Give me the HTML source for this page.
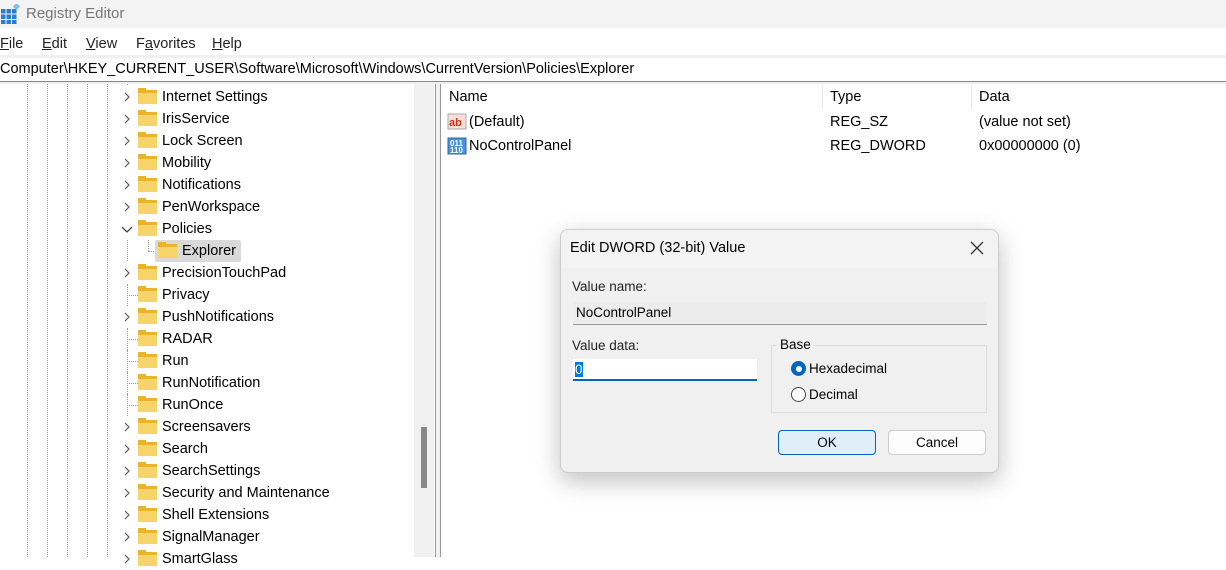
<!DOCTYPE html><html><head><style>
*{margin:0;padding:0;box-sizing:border-box}
body{width:1226px;height:557px;overflow:hidden;background:#fff;font-family:"Liberation Sans",sans-serif;font-size:14.5px;color:#000;position:relative}
.a{position:absolute;white-space:nowrap}
.dv{position:absolute;top:84px;height:473px;border-left:1px dotted #999}
.row{position:absolute;height:22px;line-height:22px}
.fold{position:absolute;width:19px;height:14px;background:#f7d46a;border-top:3px solid #eab42a;top:4px}
.fold:before{content:"";position:absolute;left:0;top:-5px;width:8px;height:3px;background:#eab42a}
.m{position:absolute;top:36px;font-size:14.5px;color:#222}
</style></head><body>
<div class="a" style="left:0;top:0;width:1226px;height:28px;background:#f3f3f3"></div>
<svg class="a" style="left:1px;top:4px" width="20" height="20" viewBox="0 0 20 20"><g fill="#2b7cd3"><rect x="0" y="5" width="4.5" height="4.5"/><rect x="5.5" y="5" width="4.5" height="4.5"/><rect x="11" y="5" width="4.5" height="4.5"/><rect x="0" y="10.5" width="4.5" height="4.5"/><rect x="5.5" y="10.5" width="4.5" height="4.5"/><rect x="11" y="10.5" width="4.5" height="4.5"/><rect x="0" y="16" width="4.5" height="4"/><rect x="5.5" y="16" width="4.5" height="4"/><rect x="11" y="16" width="4.5" height="4"/></g><rect x="13" y="0" width="5" height="5" fill="#7cc0f0" transform="rotate(45 15.5 2.5)"/></svg>
<div class="a" style="left:26px;top:5px;color:#777;font-size:15px">Registry Editor</div>
<div class="m" style="left:0"><u>F</u>ile</div>
<div class="m" style="left:42px"><u>E</u>dit</div>
<div class="m" style="left:86px"><u>V</u>iew</div>
<div class="m" style="left:136px">F<u>a</u>vorites</div>
<div class="m" style="left:212px"><u>H</u>elp</div>
<div class="a" style="left:0;top:55px;width:1226px;height:3px;background:#f0f0f0"></div>
<div class="a" style="left:0;top:61px;font-size:14.5px">Computer\HKEY_CURRENT_USER\Software\Microsoft\Windows\CurrentVersion\Policies\Explorer</div>
<div class="a" style="left:0;top:81px;width:1226px;height:3px;background:#f0f0f0;border-top:1px solid #888"></div>
<div class="dv" style="left:27px"></div><div class="dv" style="left:47px"></div><div class="dv" style="left:67px"></div><div class="dv" style="left:87px"></div><div class="dv" style="left:107px"></div>
<div class="a" style="left:127px;top:84px;height:473px;border-left:1px dotted #999"></div>
<div id="t2"></div>
<div class="a" style="left:414px;top:84px;width:20px;height:473px;background:#f0f0f0"></div>
<div class="a" style="left:421px;top:427px;width:6px;height:61px;background:#888"></div>
<div class="a" style="left:435px;top:84px;width:6px;height:473px;background:#f0f0f0;border-left:1px solid #999;border-right:1px solid #999"></div>
<div class="a" style="left:449px;top:89px">Name</div>
<div class="a" style="left:822px;top:86px;height:22px;border-left:1px solid #e5e5e5"></div>
<div class="a" style="left:830px;top:89px">Type</div>
<div class="a" style="left:971px;top:86px;height:22px;border-left:1px solid #e5e5e5"></div>
<div class="a" style="left:979px;top:89px">Data</div>
<svg class="a" style="left:447px;top:113px" width="20" height="18"><rect x="1" y="1" width="18" height="15" fill="#f8e0d8" stroke="#aaa"/><text x="2" y="13" font-family="Liberation Sans" font-weight="bold" font-size="11" fill="#d03020">ab</text></svg>
<div class="a" style="left:469px;top:114px">(Default)</div><div class="a" style="left:830px;top:114px">REG_SZ</div><div class="a" style="left:979px;top:114px">(value not set)</div>
<svg class="a" style="left:447px;top:137px" width="20" height="18"><rect x="1" y="1" width="18" height="16" fill="#4a90d9" stroke="#2a6ab0"/><text x="3" y="9" font-family="Liberation Sans" font-weight="bold" font-size="8" fill="#fff">011</text><text x="3" y="16" font-family="Liberation Sans" font-weight="bold" font-size="8" fill="#fff">110</text></svg>
<div class="a" style="left:469px;top:138px">NoControlPanel</div><div class="a" style="left:830px;top:138px">REG_DWORD</div><div class="a" style="left:979px;top:138px">0x00000000 (0)</div>
<div class="a" style="left:560px;top:229px;width:439px;height:244px;background:#f0f0f0;border:1px solid #ccc;border-radius:8px;box-shadow:0 8px 24px rgba(0,0,0,.25);overflow:hidden">
<div class="a" style="left:0;top:0;width:439px;height:38px;background:#f3f3f3"></div>
<div class="a" style="left:9px;top:10px">Edit DWORD (32-bit) Value</div>
<svg class="a" style="left:409px;top:11px" width="14" height="14"><path d="M1 1L13 13M13 1L1 13" stroke="#333" stroke-width="1.3"/></svg>
<div class="a" style="left:11px;top:49px;font-size:13.5px;color:#222">Value name:</div>
<div class="a" style="left:12px;top:72px;width:414px;height:23px;background:#ececec;border-bottom:1px solid #999;padding:3px 3px;font-size:13.5px">NoControlPanel</div>
<div class="a" style="left:11px;top:108px;font-size:13.5px;color:#222">Value data:</div>
<div class="a" style="left:12px;top:129px;width:184px;height:22px;background:#fff;border-bottom:2px solid #0067c0;padding:3px 2px;font-size:13.5px"><span style="background:#0078d7;color:#fff">0</span></div>
<div class="a" style="left:210px;top:115px;width:216px;height:68px;border:1px solid #ddd"></div>
<div class="a" style="left:216px;top:107px;padding:0 3px;background:#f0f0f0;font-size:13.5px">Base</div>
<div class="a" style="left:230px;top:131px;width:15px;height:15px;border-radius:50%;background:#0067c0"><div class="a" style="left:4.5px;top:4.5px;width:6px;height:6px;border-radius:50%;background:#fff"></div></div>
<div class="a" style="left:248px;top:131px;font-size:13.5px">Hexadecimal</div>
<div class="a" style="left:230px;top:157px;width:15px;height:15px;border-radius:50%;border:1px solid #444;background:#fff"></div>
<div class="a" style="left:248px;top:157px;font-size:13.5px">Decimal</div>
<div class="a" style="left:217px;top:200px;width:98px;height:25px;background:#e0eef9;border:1px solid #0067c0;border-radius:4px;text-align:center;line-height:23px;font-size:13.5px">OK</div>
<div class="a" style="left:327px;top:200px;width:98px;height:25px;background:#fdfdfd;border:1px solid #ccc;border-radius:4px;text-align:center;line-height:23px;font-size:13.5px">Cancel</div>
</div>
<script>
var r=[["Internet Settings",1],["IrisService",1],["Lock Screen",1],["Mobility",1],["Notifications",1],["PenWorkspace",1],["Policies",2],["Explorer",3],["PrecisionTouchPad",1],["Privacy",0],["PushNotifications",1],["RADAR",0],["Run",0],["RunNotification",0],["RunOnce",0],["Screensavers",1],["Search",1],["SearchSettings",1],["Security and Maintenance",1],["Shell Extensions",1],["SignalManager",1],["SmartGlass",1]];
var out="";r.forEach(function(e,i){var y=86+i*22;
if(e[1]==3){out+='<div class="row" style="left:127px;top:'+y+'px;width:120px"><div class="a" style="left:21px;top:0;height:11px;border-left:1px dotted #999"></div><div class="a" style="left:21px;top:11px;width:8px;border-top:1px dotted #999"></div><div class="a" style="left:28px;top:0;width:86px;height:22px;background:#d9d9d9;border-radius:2px"></div><div class="fold" style="left:31px"></div><div class="a" style="left:55px;top:0">'+e[0]+'</div></div>';return;}
out+='<div class="row" style="left:119px;top:'+y+'px;width:290px;background:#fff">';
if(e[1]==1)out+='<svg class="a" style="left:3px;top:6px" width="10" height="10"><path d="M3 1 L7 5 L3 9" fill="none" stroke="#666" stroke-width="1.3"/></svg>';
else if(e[1]==2)out+='<svg class="a" style="left:2px;top:6px" width="12" height="10"><path d="M1 3 L6 8 L11 3" fill="none" stroke="#444" stroke-width="1.3"/></svg>';
else out+='<div class="a" style="left:8px;top:11px;width:11px;border-top:1px dotted #999"></div><div class="a" style="left:8px;top:0;height:22px;border-left:1px dotted #999"></div>';
out+='<div class="fold" style="left:19px"></div><div class="a" style="left:43px;top:0">'+e[0]+'</div></div>';});
document.getElementById("t2").innerHTML=out;
</script>
</body></html>
